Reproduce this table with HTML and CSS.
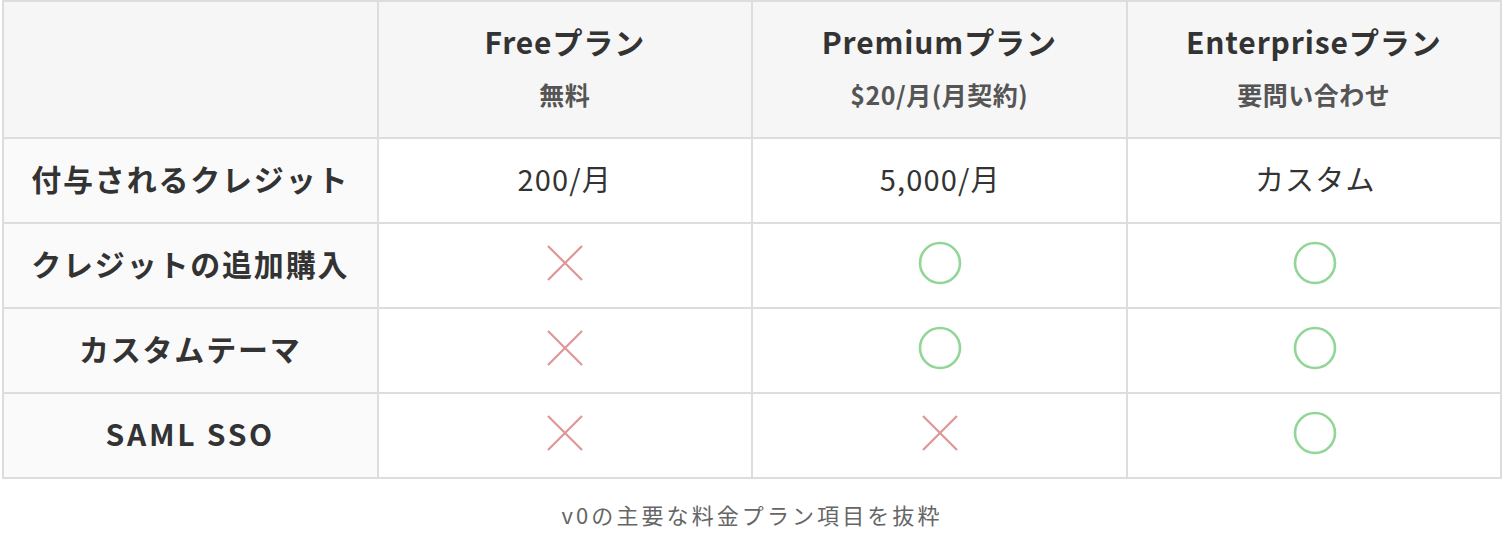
FILE: index.html
```html
<!DOCTYPE html>
<html lang="ja">
<head>
<meta charset="utf-8">
<link rel="stylesheet" href="styles.css">
</head>
<body>
<figure class="plans">
  <table class="plan-table">
    <thead>
      <tr>
        <th class="corner"></th>
        <th class="plan"><div class="plan-name">Freeプラン</div><div class="plan-price">無料</div></th>
        <th class="plan"><div class="plan-name">Premiumプラン</div><div class="plan-price">$20/月(月契約)</div></th>
        <th class="plan"><div class="plan-name">Enterpriseプラン</div><div class="plan-price">要問い合わせ</div></th>
      </tr>
    </thead>
    <tbody>
      <tr>
        <th class="feature">付与されるクレジット</th>
        <td>200/月</td>
        <td>5,000/月</td>
        <td>カスタム</td>
      </tr>
      <tr>
        <th class="feature">クレジットの追加購入</th>
        <td><svg class="mark no" viewBox="0 0 36 36"><path d="M1 1L35 35M35 1L1 35"/></svg></td>
        <td><svg class="mark yes" viewBox="0 0 44 44"><circle cx="22" cy="22" r="20"/></svg></td>
        <td><svg class="mark yes" viewBox="0 0 44 44"><circle cx="22" cy="22" r="20"/></svg></td>
      </tr>
      <tr>
        <th class="feature">カスタムテーマ</th>
        <td><svg class="mark no" viewBox="0 0 36 36"><path d="M1 1L35 35M35 1L1 35"/></svg></td>
        <td><svg class="mark yes" viewBox="0 0 44 44"><circle cx="22" cy="22" r="20"/></svg></td>
        <td><svg class="mark yes" viewBox="0 0 44 44"><circle cx="22" cy="22" r="20"/></svg></td>
      </tr>
      <tr>
        <th class="feature feature-latin">SAML SSO</th>
        <td><svg class="mark no" viewBox="0 0 36 36"><path d="M1 1L35 35M35 1L1 35"/></svg></td>
        <td><svg class="mark no" viewBox="0 0 36 36"><path d="M1 1L35 35M35 1L1 35"/></svg></td>
        <td><svg class="mark yes" viewBox="0 0 44 44"><circle cx="22" cy="22" r="20"/></svg></td>
      </tr>
    </tbody>
  </table>
  <figcaption class="caption">v0の主要な料金プラン項目を抜粋</figcaption>
</figure>
</body>
</html>
```
FILE: styles.css
```css
html, body {
  margin: 0;
  padding: 0;
  background: #ffffff;
}
body {
  font-family: "Noto Sans CJK JP", "Noto Sans", sans-serif;
  color: #333333;
}
.plans {
  margin: 0;
  padding: 0 0 0 2px;
  width: 1500px;
}
.plan-table {
  width: 1500px;
  border-collapse: collapse;
  table-layout: fixed;
  border: 2px solid #dddddd;
}
.plan-table th,
.plan-table td {
  border: 2px solid #dddddd;
  text-align: center;
  vertical-align: middle;
  padding: 0 0 6px 0;
}
.plan-table thead th {
  background: #f6f6f6;
  padding: 0 0 4px 0;
}
.plan-table thead tr {
  height: 137px;
}
.plan-table tbody tr {
  height: 85px;
}
.plan-table tbody td:nth-child(3) {
  padding-left: 2px;
}
.plan-table tbody td:nth-child(4) {
  padding-left: 3px;
}
.plan-name {
  font-size: 30px;
  font-weight: 700;
  line-height: 40px;
  letter-spacing: 0.03em;
}
.plan-price {
  margin-top: 13px;
  font-size: 25px;
  font-weight: 700;
  line-height: 40px;
  color: #555555;
  letter-spacing: 0.02em;
}
.feature {
  background: #fafafa;
  font-size: 30px;
  font-weight: 700;
  letter-spacing: 0.06em;
}
.feature-latin {
  letter-spacing: 0.09em;
}
.plan-table td {
  font-size: 29px;
  font-weight: 400;
  letter-spacing: 0.04em;
}
.mark {
  display: block;
  margin: 0 auto;
  fill: none;
}
.mark.no {
  width: 36px;
  height: 36px;
  stroke: #dd9797;
  stroke-width: 2.2;
}
.mark.yes {
  width: 44px;
  height: 44px;
  stroke: #92d697;
  stroke-width: 2.6;
}
.caption {
  margin: 0;
  padding-top: 20px;
  text-align: center;
  font-size: 22px;
  line-height: 30px;
  color: #666666;
  letter-spacing: 0.14em;
}
```
